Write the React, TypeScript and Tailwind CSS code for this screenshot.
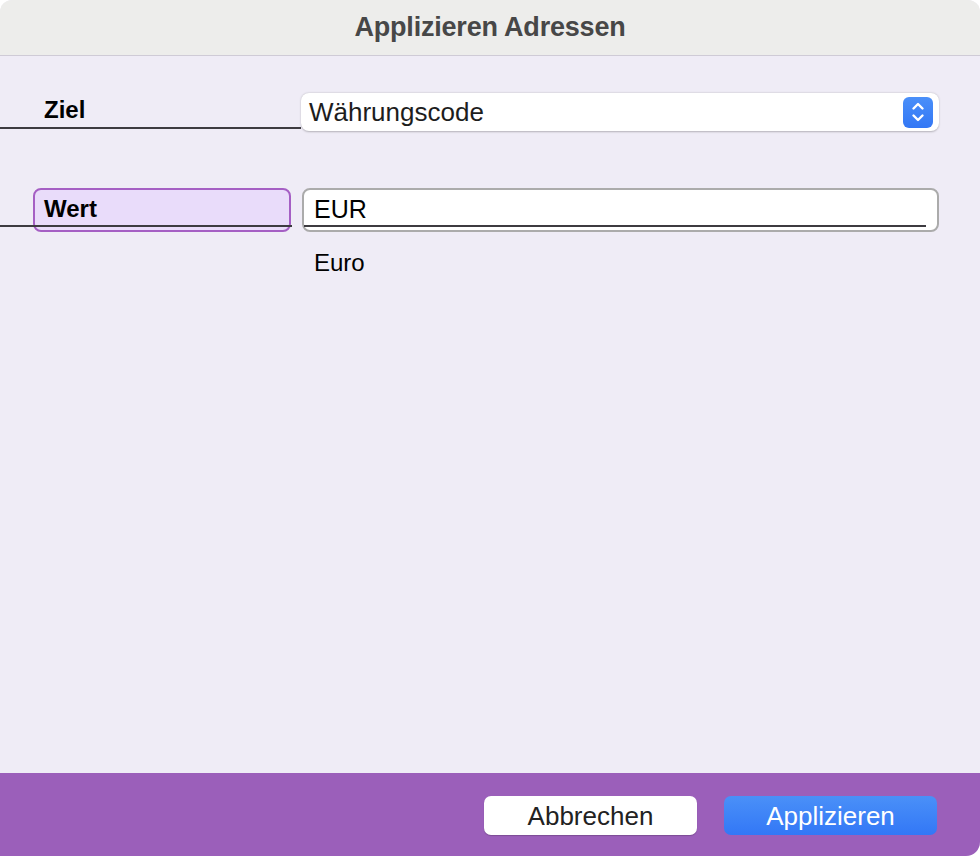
export default function App() {
  const font = { fontFamily: '"Liberation Sans", Arial, sans-serif' };
  return (
    <div className="w-[980px] h-[856px] bg-white overflow-hidden" style={font}>
      <div className="flex flex-col h-full rounded-t-[12px] rounded-br-[14px] overflow-hidden bg-[#efecf6]">
        {/* title bar */}
        <div className="h-[56px] shrink-0 bg-[#ededeb] border-b border-[#cfcbd6] flex items-center justify-center">
          <span className="text-[27px] font-bold text-[#474747] tracking-[-0.2px] leading-none">Applizieren Adressen</span>
        </div>

        {/* body */}
        <div className="flex-1 relative">
          {/* Ziel row */}
          <div className="flex items-center mt-[37px] h-[38px]">
            <div className="relative w-[301px] h-full">
              <span className="absolute left-[44px] top-[3px] text-[24px] leading-[28px] font-bold text-black">Ziel</span>
              <div className="absolute left-0 right-0 bottom-[2px] h-[2px] bg-[#3d3b40]" />
            </div>
            <div className="w-[638px] h-full bg-white rounded-[8px] shadow-[0_0.5px_2px_rgba(0,0,0,0.25)] flex items-center justify-between pl-[8px] pr-[6px]">
              <span className="text-[26px] leading-[30px] text-[#1d1d1d]">Währungscode</span>
              <div className="w-[30px] h-[31px] rounded-[6px] bg-gradient-to-b from-[#4a8ff9] to-[#3377f5] flex items-center justify-center">
                <svg width="16" height="24" viewBox="0 0 16 24" fill="none" stroke="white" strokeWidth="2.4" strokeLinecap="round" strokeLinejoin="round">
                  <path d="M3.5 8.5 L8 4 L12.5 8.5" />
                  <path d="M3.5 15.5 L8 20 L12.5 15.5" />
                </svg>
              </div>
            </div>
          </div>

          {/* Wert row */}
          <div className="flex items-start mt-[57px]">
            <div className="relative w-[302px] h-[44px]">
              <div className="absolute left-[33px] top-0 w-[258px] h-[44px] rounded-[8px] bg-[#e9dcfa] border-2 border-[#a55fc4]" />
              <span className="absolute left-[44px] top-[7px] text-[24px] leading-[28px] font-bold text-black">Wert</span>
              <div className="absolute left-0 right-[10px] top-[37px] h-[2px] bg-[#3d3b40]" />
            </div>
            <div className="flex flex-col">
              <div className="relative w-[637px] h-[44px] bg-white rounded-[8px] border-2 border-[#ababab] flex items-center pl-[10px] pb-[3px]">
                <span className="text-[25px] leading-[30px] text-black">EUR</span>
                <div className="absolute left-0 right-[11px] top-[35px] h-[2px] bg-[#3d3b40]" />
              </div>
              <span className="ml-[12px] mt-[17px] text-[24px] leading-[28px] text-black">Euro</span>
            </div>
          </div>
        </div>

        {/* footer */}
        <div className="h-[83px] shrink-0 bg-[#9b5fba] flex items-start justify-end pt-[23px] pr-[43px] gap-[27px]">
          <button className="w-[213px] h-[39px] bg-white rounded-[7px] shadow-[0_1px_1px_rgba(0,0,0,0.2)] text-[26px] leading-none text-[#222]">
            Abbrechen
          </button>
          <button className="w-[213px] h-[39px] rounded-[7px] bg-gradient-to-b from-[#4a90f8] to-[#3377f6] text-[26px] leading-none text-white">
            Applizieren
          </button>
        </div>
      </div>
    </div>
  );
}
